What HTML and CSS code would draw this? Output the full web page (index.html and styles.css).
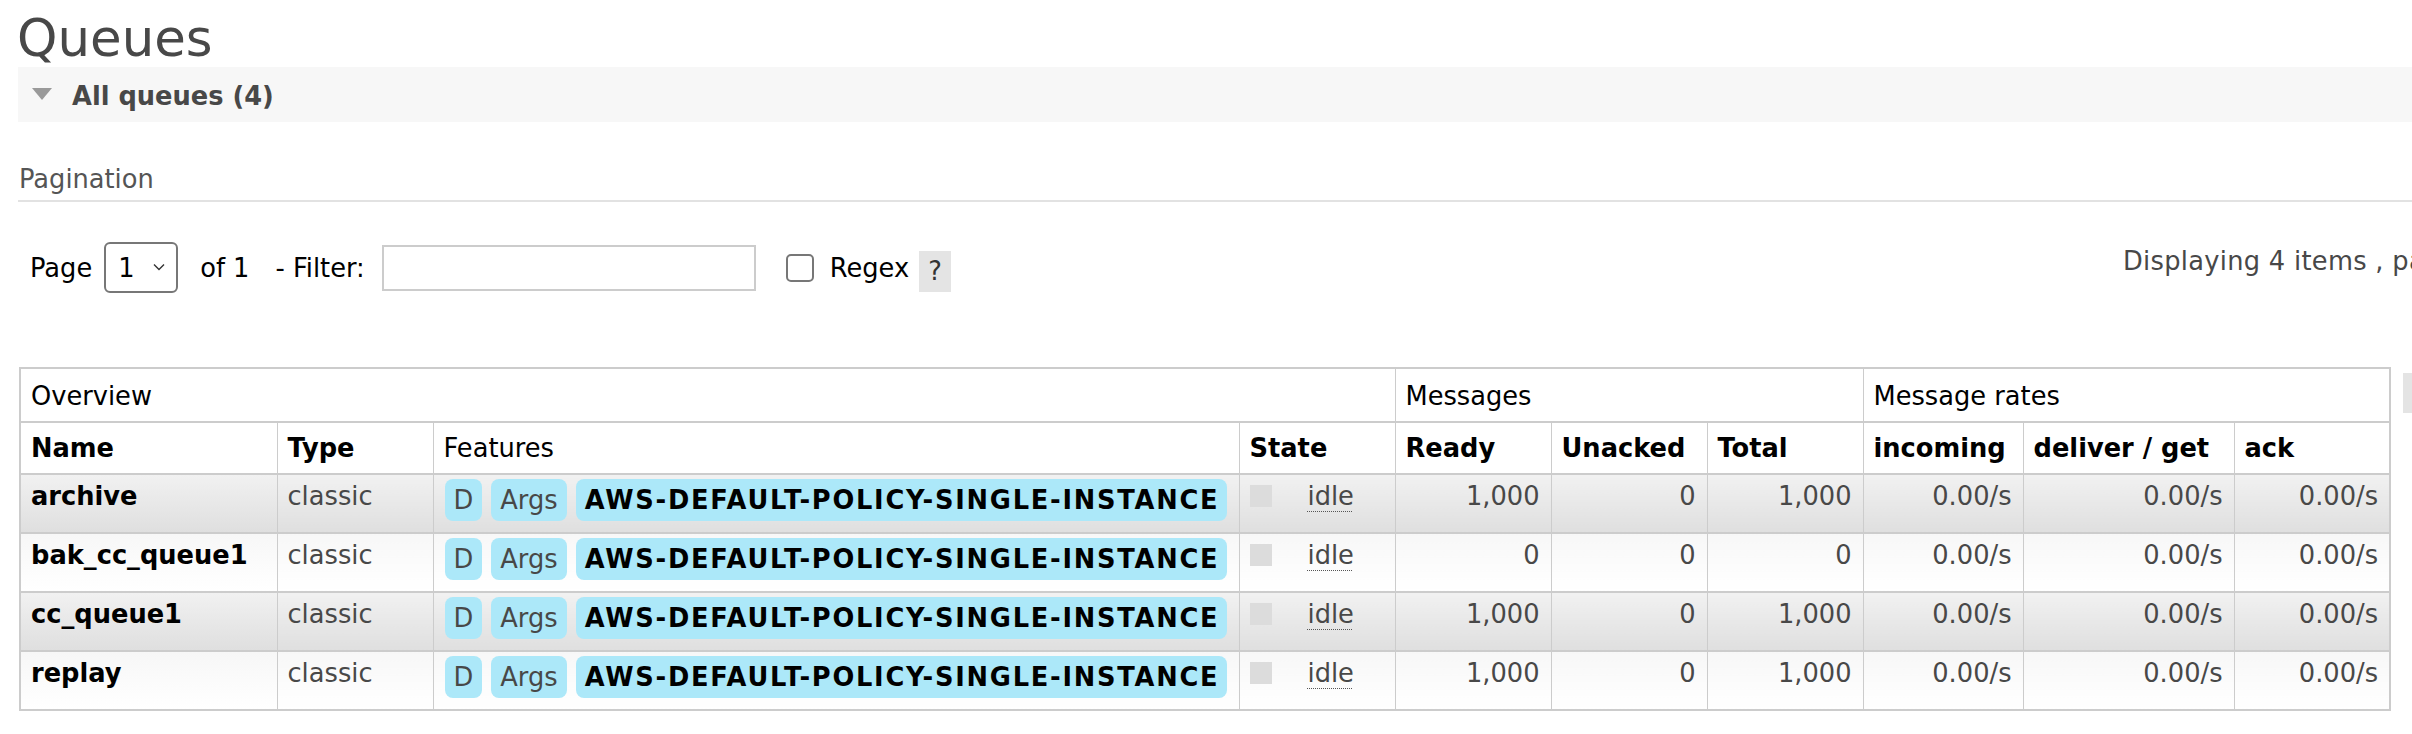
FILE: index.html
```html
<!DOCTYPE html>
<html lang="en">
<head>
<meta charset="utf-8">
<title>Queues</title>
<link rel="stylesheet" href="styles.css">
</head>
<body>
<div class="page">
  <h1 class="title">Queues</h1>
  <div class="section">
    <h2 class="section-head"><span class="tri"></span>All queues (4)</h2>
    <div class="section-body">
      <div class="pagination">
        <h3 class="pag-title">Pagination</h3>
        <div class="pag-row">
          <div class="pag-left">
            <span class="lbl">Page</span>
            <div class="select"><span class="sel-val">1</span><svg class="chev" width="12" height="8" viewBox="0 0 12 8"><path d="M1 1.5 L6 6.5 L11 1.5" fill="none" stroke="#333" stroke-width="1.4"/></svg></div>
            <span class="lbl of">of 1</span>
            <span class="lbl filter">- Filter:</span>
            <span class="input"></span>
            <span class="checkbox"></span>
            <span class="lbl regex">Regex</span>
            <span class="help">?</span>
          </div>
          <div class="pag-right">Displaying 4 items , page size up to: </div>
        </div>
      </div>
      <div class="table-wrap">
        <table class="list">
          <colgroup>
            <col class="c-name"><col class="c-type"><col class="c-feat"><col class="c-state">
            <col class="c-num"><col class="c-num"><col class="c-num">
            <col class="c-in"><col class="c-del"><col class="c-ack">
          </colgroup>
          <thead>
            <tr class="grp">
              <th colspan="4">Overview</th>
              <th colspan="3">Messages</th>
              <th colspan="3">Message rates</th>
            </tr>
            <tr class="cols">
              <th>Name</th><th>Type</th><th class="plain">Features</th><th>State</th>
              <th>Ready</th><th>Unacked</th><th>Total</th>
              <th>incoming</th><th>deliver / get</th><th>ack</th>
            </tr>
          </thead>
          <tbody>
            <tr class="alt1">
              <td class="name">archive</td><td>classic</td>
              <td class="feat"><span class="badge">D</span><span class="badge">Args</span><span class="badge pol">AWS-DEFAULT-POLICY-SINGLE-INSTANCE</span></td>
              <td><span class="sq"></span><span class="idle">idle</span></td>
              <td class="r">1,000</td><td class="r">0</td><td class="r">1,000</td>
              <td class="r">0.00/s</td><td class="r">0.00/s</td><td class="r">0.00/s</td>
            </tr>
            <tr class="alt2">
              <td class="name">bak_cc_queue1</td><td>classic</td>
              <td class="feat"><span class="badge">D</span><span class="badge">Args</span><span class="badge pol">AWS-DEFAULT-POLICY-SINGLE-INSTANCE</span></td>
              <td><span class="sq"></span><span class="idle">idle</span></td>
              <td class="r">0</td><td class="r">0</td><td class="r">0</td>
              <td class="r">0.00/s</td><td class="r">0.00/s</td><td class="r">0.00/s</td>
            </tr>
            <tr class="alt1">
              <td class="name">cc_queue1</td><td>classic</td>
              <td class="feat"><span class="badge">D</span><span class="badge">Args</span><span class="badge pol">AWS-DEFAULT-POLICY-SINGLE-INSTANCE</span></td>
              <td><span class="sq"></span><span class="idle">idle</span></td>
              <td class="r">1,000</td><td class="r">0</td><td class="r">1,000</td>
              <td class="r">0.00/s</td><td class="r">0.00/s</td><td class="r">0.00/s</td>
            </tr>
            <tr class="alt2">
              <td class="name">replay</td><td>classic</td>
              <td class="feat"><span class="badge">D</span><span class="badge">Args</span><span class="badge pol">AWS-DEFAULT-POLICY-SINGLE-INSTANCE</span></td>
              <td><span class="sq"></span><span class="idle">idle</span></td>
              <td class="r">1,000</td><td class="r">0</td><td class="r">1,000</td>
              <td class="r">0.00/s</td><td class="r">0.00/s</td><td class="r">0.00/s</td>
            </tr>
          </tbody>
        </table>
        <span class="colsel">+/-</span>
      </div>
    </div>
  </div>
</div>
</body>
</html>
```

FILE: styles.css
```css
html, body {
  margin: 0;
  padding: 0;
  overflow: hidden;
  background: #fff;
}
body {
  font-family: "DejaVu Sans", Verdana, sans-serif;
  font-size: 25.7px;
  color: #484848;
}
.page {
  padding-left: 18px;
}
.title {
  margin: 0 0 0 -1px;
  padding-top: 10px;
  font-size: 51.4px;
  font-weight: normal;
  line-height: 57px;
  color: #484848;
}
.section-head {
  display: flex;
  align-items: center;
  margin: 0;
  padding: 14px 0 11px 14px;
  background: #f7f7f7;
  font-size: 25.7px;
  font-weight: bold;
  line-height: 30px;
  color: #484848;
}
.tri {
  width: 0;
  height: 0;
  border-left: 10.5px solid transparent;
  border-right: 10.5px solid transparent;
  border-top: 12px solid #9a9a9a;
  margin-right: 20px;
  margin-bottom: 4px;
}
.pag-title {
  margin: 42px 0 0;
  padding-left: 1px;
  font-size: 25.7px;
  font-weight: normal;
  line-height: 30px;
  color: #555;
  padding-bottom: 6px;
  border-bottom: 2px solid #e2e2e2;
}
.pag-row {
  margin-top: 40px;
  display: grid;
  grid-template-columns: 2093px auto;
  padding-left: 12px;
}
.pag-left {
  display: flex;
  align-items: center;
  height: 51px;
  color: #000;
}
.lbl {
  line-height: 30px;
  white-space: nowrap;
}
.select {
  box-sizing: border-box;
  display: flex;
  align-items: center;
  width: 74px;
  height: 51px;
  margin-left: 12px;
  padding-left: 12px;
  border: 2px solid #777;
  border-radius: 6px;
  color: #000;
}
.chev {
  margin-left: 18px;
  margin-top: -2px;
}
.of { margin-left: 22px; }
.filter { margin-left: 26px; }
.input {
  box-sizing: border-box;
  width: 374px;
  height: 46px;
  margin-left: 17px;
  border: 2px solid #ccc;
  background: #fff;
}
.checkbox {
  box-sizing: border-box;
  width: 28px;
  height: 28px;
  margin-left: 30px;
  border: 2px solid #777;
  border-radius: 5px;
  background: #fff;
}
.regex { margin-left: 16px; }
.help {
  width: 32px;
  height: 41px;
  margin-left: 10px;
  margin-top: 8px;
  background: #e4e4e4;
  color: #333;
  text-align: center;
  line-height: 41px;
}
.pag-right {
  align-self: start;
  margin-top: 4px;
  line-height: 30px;
  white-space: nowrap;
  color: #484848;
  letter-spacing: 0.3px;
}
.table-wrap {
  display: flex;
  align-items: flex-start;
  margin-top: 74px;
  margin-left: 1px;
}
.list {
  flex: none;
  width: 2370px;
  table-layout: fixed;
  border-collapse: collapse;
  border: 2px solid #ccc;
}
.c-name { width: 257px; }
.c-type { width: 156px; }
.c-feat { width: 806px; }
.c-state { width: 156px; }
.c-num { width: 156px; }
.c-in { width: 160px; }
.c-del { width: 211px; }
.c-ack { width: 156px; }
.list th {
  text-align: left;
  color: #000;
  font-weight: bold;
  padding: 10px 10px;
  line-height: 30px;
  border-top: 2px solid #ccc;
  border-bottom: 2px solid #ccc;
  border-left: 1px solid #ccc;
  border-right: 1px solid #ccc;
  white-space: nowrap;
  background: #fff;
}
.list tr.grp th {
  font-weight: normal;
  padding-top: 12px;
}
.list th.plain { font-weight: normal; }
.list td {
  vertical-align: top;
  padding: 4px 11px 11px 10px;
  line-height: 34px;
  border-top: 2px solid #ccc;
  border-bottom: 2px solid #ccc;
  border-left: 1px solid #ccc;
  border-right: 1px solid #ccc;
  white-space: nowrap;
  color: #484848;
}
.list tr.alt1 td {
  background: linear-gradient(to bottom, #f1f1f1, #dfdfdf);
}
.list tr.alt2 td {
  background: linear-gradient(to bottom, #f7f7f7, #ffffff);
}
.list td.name {
  color: #000;
  font-weight: bold;
}
.list td.r { text-align: right; }
.list td.feat { padding-left: 11px; }
.badge {
  display: inline-block;
  vertical-align: top;
  height: 42px;
  line-height: 42px;
  padding: 0 9px;
  margin-right: 9px;
  border-radius: 8px;
  background: #ace8f9;
  color: #484848;
}
.badge.pol {
  color: #000;
  font-weight: bold;
  letter-spacing: 1.75px;
  padding-right: 8px;
}
.sq {
  display: inline-block;
  width: 22px;
  height: 22px;
  background: #dcdcdc;
  vertical-align: -2px;
}
.idle {
  margin-left: 36px;
  text-decoration: underline dotted #555;
  text-underline-offset: 6px;
  text-decoration-thickness: 1px;
}
.colsel {
  flex: none;
  margin-left: 12px;
  margin-top: 6px;
  height: 40px;
  line-height: 40px;
  padding: 0 12px;
  background: #e4e4e4;
  color: #484848;
}
```
